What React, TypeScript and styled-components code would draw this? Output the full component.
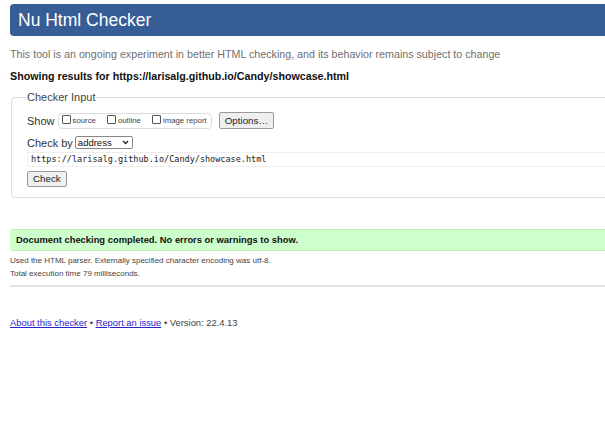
import React from "react";
import styled, { createGlobalStyle } from "styled-components";

const Global = createGlobalStyle`
  html, body { margin: 0; padding: 0; background: #fff; overflow: hidden; }
  body { font-family: "Liberation Sans", Arial, sans-serif; color: #222; }
`;

const Page = styled.div`
  width: 640px;
  padding: 4px 0 0 10px;
`;

const Header = styled.h1`
  margin: 0;
  height: 32px;
  background: #365d95;
  border-radius: 4px;
  color: #fff;
  font-size: 17.5px;
  font-weight: normal;
  line-height: 32px;
  padding-left: 8px;
`;

const Intro = styled.p`
  margin: 11px 0 0 0;
  font-size: 10.7px;
  color: #6f6f6f;
  line-height: 14px;
`;

const Results = styled.p`
  margin: 8px 0 0 0;
  font-size: 10.7px;
  font-weight: bold;
  line-height: 14px;
  color: #111;
`;

const Fieldset = styled.fieldset`
  margin: 8px 0 0 1px;
  padding: 4px 0 10px 15px;
  border: 1px solid #dcdcdc;
  border-radius: 4px;
`;

const Legend = styled.legend`
  font-size: 11px;
  color: #444;
  padding: 0 1px;
  margin-left: -1px;
`;

const Row = styled.div<{ $mt?: number }>`
  display: flex;
  align-items: center;
  gap: 3px;
  font-size: 11px;
  color: #333;
  margin-top: ${(p) => p.$mt ?? 0}px;
`;

const ToggleGroup = styled.div`
  display: flex;
  align-items: center;
  gap: 11px;
  height: 14px;
  border: 1px solid #dcdcdc;
  border-radius: 4px;
  padding: 0 4px 0 3px;
`;

const Toggle = styled.label`
  display: flex;
  align-items: center;
  gap: 2px;
  font-size: 7.8px;
  color: #444;
`;

const Box = styled.span`
  display: inline-block;
  width: 7px;
  height: 7px;
  border: 1px solid #555;
  border-radius: 1px;
  margin-bottom: 2px;
`;

const Button = styled.button<{ $h?: number }>`
  font-family: "Liberation Sans", Arial, sans-serif;
  font-size: 9.8px;
  color: #222;
  background: #efefef;
  border: 1px solid #9a9a9a;
  border-radius: 2px;
  height: ${(p) => p.$h ?? 17}px;
  padding: 0 5px;
  margin-left: 4px;
  line-height: 14px;
`;

const Select = styled.div`
  display: flex;
  align-items: center;
  justify-content: space-between;
  width: 51px;
  height: 11px;
  border: 1px solid #888;
  border-radius: 2px;
  font-size: 9.5px;
  color: #111;
  padding: 0 3px 0 2px;
  margin-left: -1px;
`;

const UrlInput = styled.div`
  margin-top: 3px;
  height: 13px;
  border: 1px solid #eee;
  border-right: none;
  font-family: "DejaVu Sans Mono", "Liberation Mono", monospace;
  font-size: 8.5px;
  line-height: 13px;
  padding-left: 3px;
  color: #222;
`;

const CheckButton = styled(Button)`
  margin: 4px 0 0 0;
  display: block;
`;

const Success = styled.div`
  margin-top: 31px;
  height: 20px;
  background: #ccffcc;
  border-top: 1px solid #b8eeb8;
  border-bottom: 1px solid #b8eeb8;
  font-size: 9.4px;
  font-weight: bold;
  line-height: 20px;
  padding-left: 6px;
  color: #111;
  border-radius: 2px 0 0 2px;
`;

const Detail = styled.p<{ $mt?: number }>`
  margin: 0;
  font-size: 8px;
  color: #444;
  line-height: 13px;
  margin-top: ${(p) => p.$mt ?? 0}px;
`;

const Divider = styled.hr`
  margin: 5px 0 0 0;
  border: none;
  border-top: 2px solid #e4e4e4;
`;

const Footer = styled.p`
  margin: 30px 0 0 0;
  font-size: 9.4px;
  color: #444;
`;

const Link = styled.a`
  color: #2525c8;
  text-decoration: underline;
`;

export default function App() {
  return (
    <>
      <Global />
      <Page>
        <Header>Nu Html Checker</Header>
        <Intro>
          This tool is an ongoing experiment in better HTML checking, and its behavior remains subject to change
        </Intro>
        <Results>Showing results for https://larisalg.github.io/Candy/showcase.html</Results>
        <Fieldset>
          <Legend>Checker Input</Legend>
          <Row $mt={5}>
            <span>Show</span>
            <ToggleGroup>
              <Toggle><Box />source</Toggle>
              <Toggle><Box />outline</Toggle>
              <Toggle><Box />image report</Toggle>
            </ToggleGroup>
            <Button>Options…</Button>
          </Row>
          <Row $mt={7}>
            <span>Check by</span>
            <Select>
              <span>address</span>
              <svg width="7" height="5" viewBox="0 0 7 5">
                <path d="M1 1 L3.5 3.5 L6 1" stroke="#222" strokeWidth="1.3" fill="none" />
              </svg>
            </Select>
          </Row>
          <UrlInput>https://larisalg.github.io/Candy/showcase.html</UrlInput>
          <CheckButton $h={16}>Check</CheckButton>
        </Fieldset>
        <Success>Document checking completed. No errors or warnings to show.</Success>
        <Detail $mt={3}>Used the HTML parser. Externally specified character encoding was utf-8.</Detail>
        <Detail>Total execution time 79 milliseconds.</Detail>
        <Divider />
        <Footer>
          <Link href="#">About this checker</Link> • <Link href="#">Report an issue</Link> • Version: 22.4.13
        </Footer>
      </Page>
    </>
  );
}
